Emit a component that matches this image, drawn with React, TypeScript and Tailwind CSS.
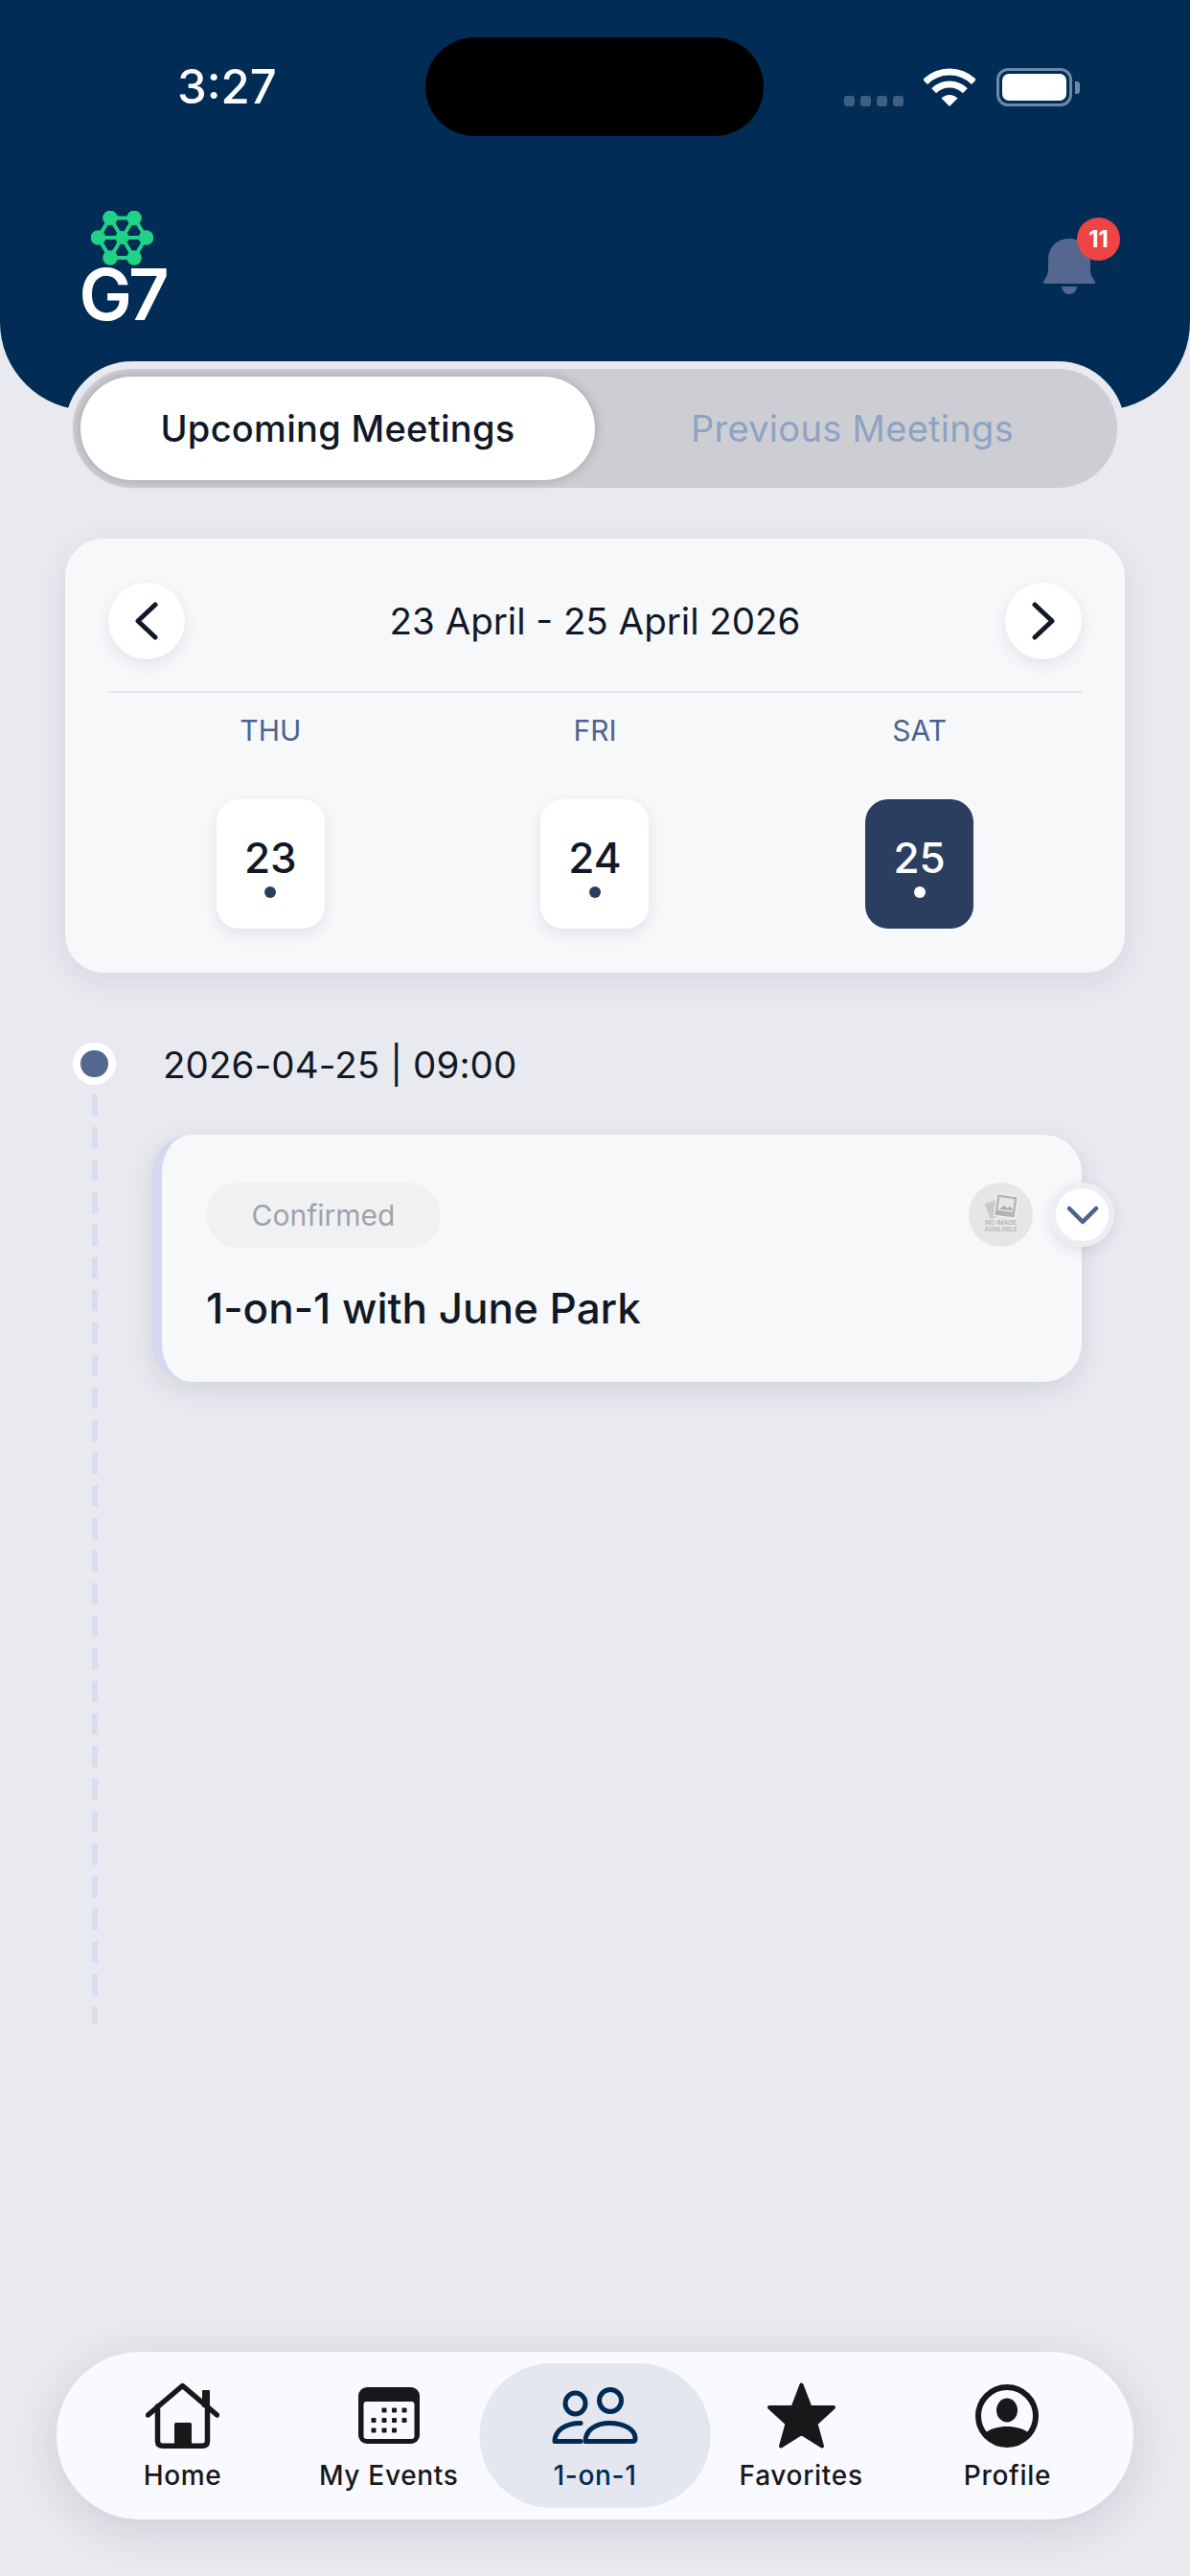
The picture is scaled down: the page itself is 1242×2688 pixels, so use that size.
import { ReactNode } from "react";

const DAYS = [
  { name: "THU", date: 23 },
  { name: "FRI", date: 24 },
  { name: "SAT", date: 25, selected: true },
];

function WifiIcon() {
  return (
    <svg width="54" height="40" viewBox="0 0 54 40" fill="none">
      <path d="M1.5 14.5 A36 36 0 0 1 52.5 14.5" stroke="#fff" strokeWidth="7" />
      <path d="M10.7 23.7 A23 23 0 0 1 43.3 23.7" stroke="#fff" strokeWidth="7" />
      <path d="M27 40 L18.5 31.5 A12 12 0 0 1 35.5 31.5 Z" fill="#fff" />
    </svg>
  );
}

function BellIcon() {
  return (
    <svg width="54" height="58" viewBox="0 0 54 58" fill="#54688f">
      <path d="M27 0 C14 0 5 9 5 22 V31 C5 37 3 41 0.5 44 Q-1 47 2 47 H52 Q55 47 53.5 44 C51 41 49 37 49 31 V22 C49 9 40 0 27 0 Z" />
      <path d="M19 50 H35 C34.500 55 31 58 27 58 C23 58 19.500 55 19 50 Z" />
    </svg>
  );
}

function LogoMark() {
  const nodes = [
    [20, 7.5],
    [45, 7.5],
    [7.5, 28],
    [57.5, 28],
    [20, 49],
    [45, 49],
  ];
  return (
    <svg width="65" height="57" viewBox="0 0 65 57" fill="none" stroke="#1fd286" strokeWidth="4">
      <path d="M20 7.500 H45 L57.500 28 L45 49 H20 L7.500 28 Z M7.500 28 H57.500 M20 7.500 L45 49 M45 7.500 L20 49" />
      <g fill="#1fd286" stroke="none">
        {nodes.map(([x, y]) => (
          <circle key={`${x}-${y}`} cx={x} cy={y} r="7.800" />
        ))}
        <circle cx="32.500" cy="28" r="7" />
      </g>
    </svg>
  );
}

function Chevron({ flip }: { flip?: boolean }) {
  return (
    <svg width="24" height="40" viewBox="0 0 24 40" fill="none" stroke="#111827" strokeWidth="5" strokeLinecap="round" strokeLinejoin="round">
      <path d={flip ? "M3 3 L21 20 L3 37" : "M21 3 L3 20 L21 37"} />
    </svg>
  );
}

function NoImageThumb() {
  return (
    <div className="w-[67px] h-[67px] rounded-full bg-[#e6e6e6] flex flex-col items-center pt-[12px] shrink-0">
      <svg width="36" height="26" viewBox="0 0 36 26">
        <rect x="3" y="7" width="17" height="17" fill="#c9c9c9" transform="rotate(-20 11 15)" />
        <rect x="12" y="1" width="22" height="23" rx="1" fill="#b3b3b3" stroke="#f0f0f0" strokeWidth="1.500" transform="rotate(8 23 12)" />
        <rect x="15" y="4" width="16" height="14" fill="#e6e6e6" transform="rotate(8 23 12)" />
        <path d="M16 16 L21 12 L24 15 L27 13 L31 17 Z" fill="#a8a8a8" />
      </svg>
      <span className="text-[6.500px] leading-[7px] text-[#a3a3a3] mt-[1px]">NO IMAGE</span>
      <span className="text-[6.500px] leading-[7px] text-[#a3a3a3]">AVAILABLE</span>
    </div>
  );
}

function HomeIcon() {
  return (
    <svg width="77" height="68" viewBox="0 0 77 68" fill="none" stroke="#18181b" strokeWidth="5.500" strokeLinecap="round" strokeLinejoin="round">
      <path d="M2.500 33 L38.500 2.500 L74.500 33" />
      <path d="M12.500 24 V60 Q12.500 65.250 18 65.250 H59 Q64.500 65.250 64.500 60 V24" />
      <rect x="60" y="8" width="6" height="16" fill="#18181b" strokeWidth="2" />
      <rect x="30" y="41" width="18" height="24" rx="1.500" fill="#18181b" stroke="none" />
    </svg>
  );
}

function CalendarIcon() {
  const rows = [
    [27, 37.500, 48],
    [16, 27, 37.500, 48],
    [16, 27, 37.500],
  ];
  const ys = [24, 34.500, 45];
  return (
    <svg width="64" height="59" viewBox="0 0 64 59" fill="#18181b">
      <rect width="64" height="59" rx="9" />
      <rect x="5.500" y="15" width="53" height="39" rx="3" fill="#f9faff" />
      {rows.map((row, i) =>
        row.map((x) => <rect key={`${i}-${x}`} x={x - 2.500} y={ys[i] - 2.500} width="5" height="5" rx="1" />)
      )}
    </svg>
  );
}

function PeopleIcon() {
  return (
    <svg width="90" height="60" viewBox="0 0 90 60" fill="none" stroke="#002b55" strokeWidth="5" strokeLinecap="round" strokeLinejoin="round">
      <ellipse cx="24.500" cy="17" rx="10.500" ry="11" />
      <circle cx="61" cy="14" r="11.500" />
      <path d="M30 37.500 C14 37.500 3 45 3 56.500 H30" />
      <path d="M35 56.500 C35 44 47 37.500 60 37.500 C75 37.500 87 44 87 53.500 Q87 56.500 84 56.500 Z" />
    </svg>
  );
}

function StarIcon() {
  return (
    <svg width="71" height="69" viewBox="0 0 71 69" fill="#18181b" stroke="#18181b" strokeWidth="4" strokeLinejoin="round">
      <path d="M35.500 2.500 L44.500 26 H69 L50.500 43 L57 66.500 L35.500 53 L14 66.500 L20.500 43 L2 26 H26.500 Z" />
    </svg>
  );
}

function ProfileIcon() {
  return (
    <svg width="66" height="66" viewBox="0 0 66 66" fill="#18181b">
      <circle cx="33" cy="33" r="30" fill="none" stroke="#18181b" strokeWidth="6" />
      <ellipse cx="33" cy="27" rx="11" ry="12.500" />
      <path d="M10 51 C16 46 24 44 33 44 C42 44 50 46 56 51 A30 30 0 0 1 10 51 Z" />
    </svg>
  );
}

function NavItem({ icon, label, active }: { icon: ReactNode; label: string; active?: boolean }) {
  return (
    <div className="relative flex flex-col items-center">
      {active && <div className="absolute top-[12px] left-1/2 -translate-x-1/2 w-[241px] h-[151px] rounded-[75px] bg-[#e4e7ef]" />}
      <div className="relative h-[71px] mt-[31px] flex items-center justify-center">{icon}</div>
      <span className={`relative mt-[10px] text-[28px] leading-[34px] font-medium tracking-[0.7px] ${active ? "text-[#002b55]" : "text-[#18181b]"}`}>
        {label}
      </span>
    </div>
  );
}

export default function App() {
  return (
    <div className="w-[1242px] h-[2688px] overflow-hidden bg-[#e9eaef] flex flex-col font-['Inter',sans-serif] text-[#111827]">
      {/* Navy header with status bar and logo */}
      <header className="h-[428px] shrink-0 bg-[#012c55] rounded-b-[92px]">
        <div className="pt-[39px] grid grid-cols-[444px_353px_1fr] items-center">
          <span className="pl-[185px] text-[49px] leading-[60px] font-medium text-white">3:27</span>
          <div className="h-[103px] rounded-full bg-black" />
          <div className="pl-[84px] flex items-end">
            <div className="flex gap-[6px] mr-[21px]">
              {[0, 1, 2, 3].map((i) => (
                <span key={i} className="w-[11px] h-[11px] rounded-[3px] bg-[#3e5f80]" />
              ))}
            </div>
            <WifiIcon />
            <div className="ml-[22px] w-[79px] h-[40px] rounded-[12px] border-[3px] border-[#6d89a8] p-[3px]">
              <div className="w-full h-full rounded-[7px] bg-white" />
            </div>
            <div className="ml-[3px] mb-[13px] w-[5px] h-[13px] rounded-r-[3px] bg-[#6d89a8]" />
          </div>
        </div>
        <div className="mt-[78px] pl-[82px] pr-[99px] flex justify-between items-start">
          <div className="w-[91px] flex flex-col items-center">
            <LogoMark />
            <span className="mt-[-3px] text-[74px] leading-[66px] font-semibold tracking-[-4px] whitespace-nowrap text-white">G7</span>
          </div>
          <div className="relative mt-[29px]">
            <BellIcon />
            <div className="absolute -top-[22px] -right-[26px] w-[45px] h-[45px] rounded-full bg-[#ef4444] flex items-center justify-center text-[24px] font-bold text-white">
              11
            </div>
          </div>
        </div>
      </header>

      {/* Upcoming / previous switch */}
      <div className="relative mt-[-51px] mx-[68px] h-[140px] shrink-0 rounded-full border-[8px] border-[#e9eaef] bg-[#cdced3] p-[8px] grid grid-cols-2 text-[38px] leading-[46px] tracking-[0.3px]">
        <div className="rounded-full bg-white flex items-center justify-center font-medium shadow-[0_0_12px_rgba(0,0,0,0.22)]">Upcoming Meetings</div>
        <div className="flex items-center justify-center text-[#8ea3c3]">Previous Meetings</div>
      </div>

      {/* Week picker */}
      <section className="mt-[45px] mx-[68px] h-[453px] shrink-0 rounded-[40px] bg-[#f7f8fa] px-[45px] pt-[45px] shadow-[0_8px_32px_rgba(40,50,90,0.1)]">
        <div className="h-[81px] flex items-center justify-between">
          <button className="w-[80px] h-[80px] rounded-full bg-white flex items-center justify-center shadow-[0_6px_16px_rgba(40,50,90,0.1)]">
            <Chevron />
          </button>
          <span className="text-[38.500px] leading-[46px]">23 April - 25 April 2026</span>
          <button className="w-[80px] h-[80px] rounded-full bg-white flex items-center justify-center shadow-[0_6px_16px_rgba(40,50,90,0.1)]">
            <Chevron flip />
          </button>
        </div>
        <div className="mt-[33px] h-[2px] bg-[#e5e7f0]" />
        <div className="grid grid-cols-3">
          {DAYS.map((d) => (
            <div key={d.name} className="flex flex-col items-center">
              <span className="mt-[21px] h-[36px] text-[30px] leading-[36px] text-[#4d6490]">{d.name}</span>
              <div
                className={`mt-[54px] w-[113px] h-[135px] rounded-[24px] flex flex-col items-center ${
                  d.selected ? "bg-[#2c3e60] text-white" : "bg-white shadow-[0_6px_16px_rgba(40,50,90,0.1)]"
                }`}
              >
                <span className="mt-[34px] text-[44px] leading-[54px] font-medium">{d.date}</span>
                <span className={`mt-[3px] w-[12px] h-[12px] rounded-full ${d.selected ? "bg-white" : "bg-[#2c3e60]"}`} />
              </div>
            </div>
          ))}
        </div>
      </section>

      {/* Meeting timeline */}
      <section className="mt-[73px] pl-[76px] flex flex-1">
        <div className="w-[45px] flex flex-col items-center">
          <div className="w-[45px] h-[44px] rounded-full border-[8px] border-white bg-[#54688f]" />
          <div className="mt-[10px] w-[6px] h-[970px] bg-[repeating-linear-gradient(to_bottom,#d9dcef_0,#d9dcef_22px,transparent_22px,transparent_34px)]" />
        </div>
        <div className="ml-[38px]">
          <p className="ml-[11px] h-[44px] text-[38.500px] leading-[46px] tracking-[0.1px]">2026-04-25 | 09:00</p>
          <article className="relative mt-[52px] w-[970px] h-[258px] rounded-[40px] border-l-[10px] border-[#d5d9ef] bg-[#f7f8fa] pl-[46px] pt-[50px] shadow-[0_8px_28px_rgba(40,50,90,0.12)]">
            <div className="flex items-start justify-between">
              <span className="w-[245px] h-[68px] rounded-full bg-[#f1f1f2] flex items-center justify-center text-[30px] text-[#9ca3af]">Confirmed</span>
              <div className="mr-[51px]">
                <NoImageThumb />
              </div>
            </div>
            <h2 className="mt-[36px] text-[44px] leading-[54px] font-medium">1-on-1 with June Park</h2>
            <button className="absolute top-[50px] -right-[34px] w-[67px] h-[67px] rounded-full border-[6px] border-[#eceef2] bg-white flex items-center justify-center shadow-[0_4px_14px_rgba(40,50,90,0.12)]">
              <svg width="34" height="20" viewBox="0 0 34 20" fill="none" stroke="#4d6490" strokeWidth="4.500" strokeLinecap="round" strokeLinejoin="round">
                <path d="M3 3 L17 17 L31 3" />
              </svg>
            </button>
          </article>
        </div>
      </section>

      {/* Bottom tab bar */}
      <nav className="mx-[59px] mb-[59px] h-[175px] shrink-0 rounded-[87px] bg-[#f9faff] px-[24px] grid grid-cols-5 shadow-[0_10px_48px_rgba(30,35,60,0.14)]">
        <NavItem icon={<HomeIcon />} label="Home" />
        <NavItem icon={<CalendarIcon />} label="My Events" />
        <NavItem icon={<PeopleIcon />} label="1-on-1" active />
        <NavItem icon={<StarIcon />} label="Favorites" />
        <NavItem icon={<ProfileIcon />} label="Profile" />
      </nav>
    </div>
  );
}
